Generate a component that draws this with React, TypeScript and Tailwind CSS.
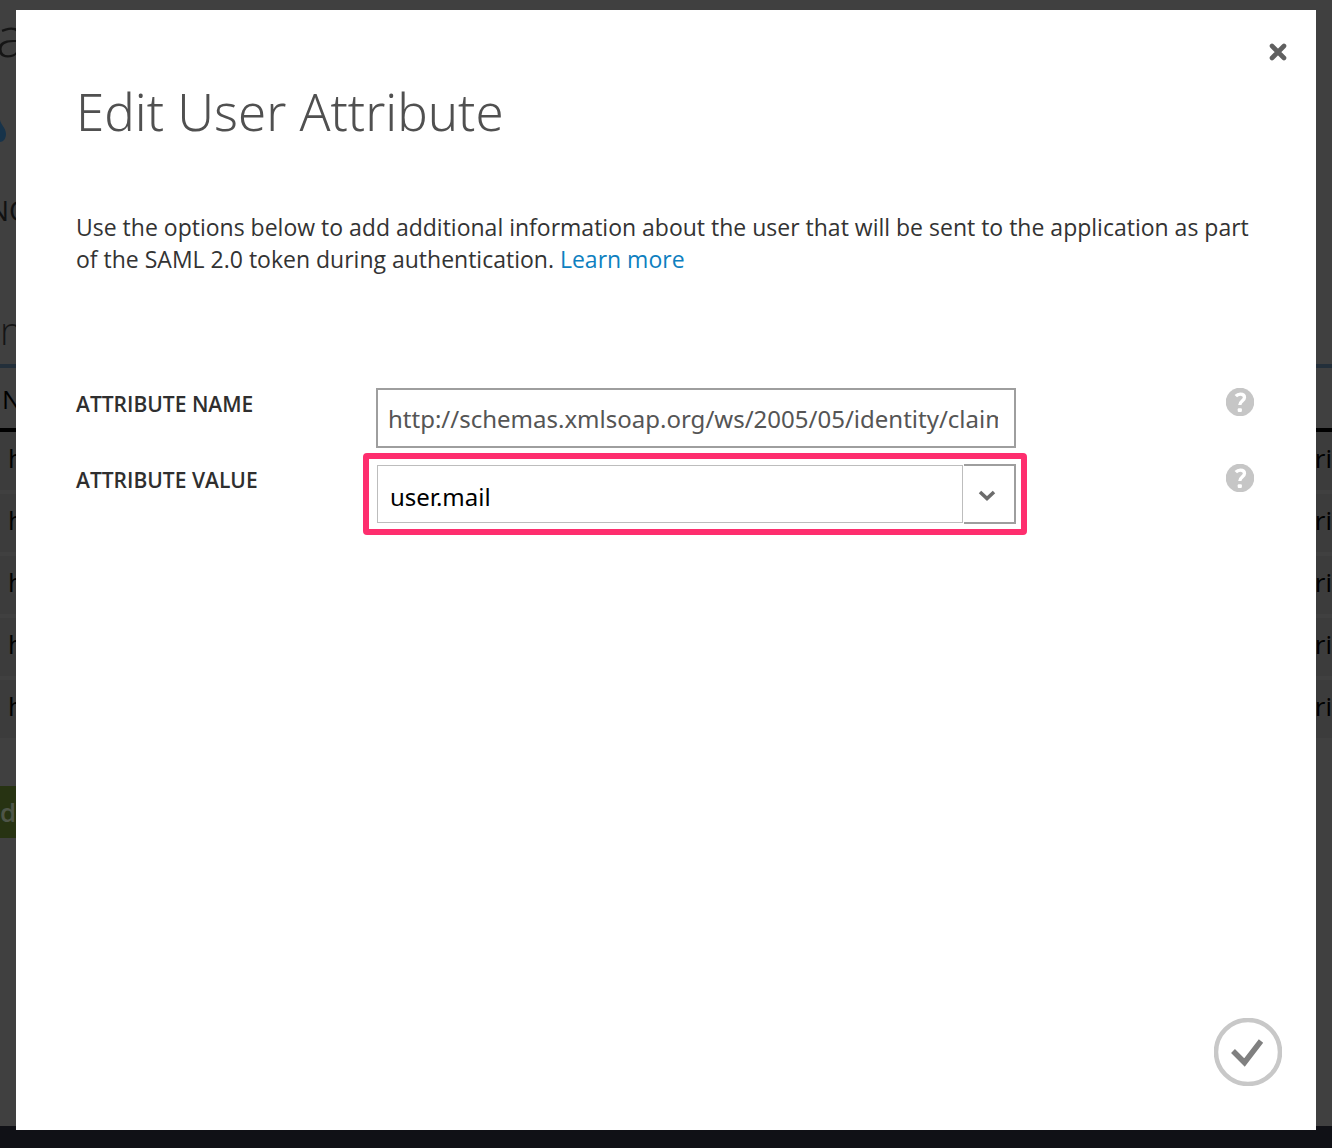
import React, { useState } from "react";

const rows = ["name", "email", "given", "surname", "upn"];

function HelpIcon({ label }: { label: string }) {
  return (
    <button type="button" aria-label={label} className="size-7 shrink-0">
      <svg viewBox="0 0 28 28" className="size-7">
        <circle cx="14" cy="14" r="14.3" fill="#c6c6c6" />
        <path
          d="M9.8 8.2C11.2 6.6 12.6 6.1 14.3 6.1C16.9 6.1 18.5 7.4 18.5 9.5C18.5 12.6 14.1 13 13.8 17"
          fill="none"
          stroke="#fff"
          strokeWidth="3.3"
        />
        <rect x="11.7" y="20.3" width="4.2" height="3.6" rx="1" fill="#fff" />
      </svg>
    </button>
  );
}

function PageBehind() {
  return (
    <div aria-hidden="true" className="col-start-1 row-start-1 flex flex-col overflow-hidden bg-[#404040] text-black">
      <div className="-ml-1 h-20 text-[56px] leading-[70px] font-light text-[#151515]">a</div>
      <div className="h-[104px] pt-10">
        <svg viewBox="0 0 6 22" className="h-[22px] w-1.5">
          <path d="M0 0C1 5 6 8 6 14C6 19 3 22 0 22Z" fill="#17334a" />
        </svg>
      </div>
      <div className="-ml-3 h-[116px] text-[28px] leading-[52px] text-[#111111]">NO</div>
      <div className="h-16 text-[38px] leading-[60px] font-light text-[#151515]">n</div>
      <div className="h-1 bg-[#232f3a]" />
      <div className="h-[60px] pl-0.5 text-[26px] leading-[62px]">N</div>
      <div className="h-1 bg-black" />
      {rows.map((row) => (
        <div
          key={row}
          className="flex h-[62px] justify-between border-b-4 border-[#404040] bg-[#3c3c3c] pl-2 text-[26px] leading-[52px]"
        >
          <span>h</span>
          <span>tri</span>
        </div>
      ))}
      <div className="mt-11 h-[52px] w-10 bg-[#273312] text-[26px] leading-[52px] font-semibold text-[#4e5548]">d</div>
      <div className="mt-auto h-[22px] bg-[#101116]" />
    </div>
  );
}

export default function App() {
  const [name, setName] = useState("http://schemas.xmlsoap.org/ws/2005/05/identity/claims/emailaddress");
  const [value, setValue] = useState("user.mail");

  return (
    <div className="grid min-h-screen grid-cols-1 font-['Open_Sans',sans-serif]">
      <PageBehind />
      <div
        role="dialog"
        aria-labelledby="dialog-title"
        className="relative col-start-1 row-start-1 mx-4 mt-2.5 mb-[18px] flex flex-col bg-white px-15"
      >
        <button type="button" aria-label="Close" className="absolute top-8 right-7 size-5">
          <svg viewBox="0 0 20 20" className="size-5">
            <path d="M4 4L16 16M16 4L4 16" stroke="#606060" strokeWidth="4.6" strokeLinecap="round" />
          </svg>
        </button>

        <h1
          id="dialog-title"
          className="pt-[66px] font-['Noto_Sans',sans-serif] text-[51px] leading-[70px] font-light text-[#505050]"
        >
          Edit User Attribute
        </h1>

        <p className="-mr-4 mt-[65px] text-[23px] leading-8 text-[#333333]">
          Use the options below to add additional information about the user that will be sent to the application as part{" "}
          <br />
          of the SAML 2.0 token during authentication.{" "}
          <a href="#learn" className="text-[#0e7fc0]">
            Learn more
          </a>
        </p>

        <form className="mt-[113px] flex flex-1 flex-col" onSubmit={(e) => e.preventDefault()}>
          <div className="flex">
            <label htmlFor="attr-name" className="w-75 shrink-0 text-[21px] leading-8 font-semibold text-[#2f2f2f]">
              ATTRIBUTE NAME
            </label>
            <input
              id="attr-name"
              value={name}
              onChange={(e) => setName(e.target.value)}
              className="h-15 w-160 min-w-0 border-2 border-[#9e9e9e] bg-white pr-4 pl-2.5 font-['Noto_Sans',sans-serif] text-2xl text-[#555555] outline-none"
            />
            <div className="mr-0.5 ml-auto">
              <HelpIcon label="Help for attribute name" />
            </div>
          </div>

          <div className="mt-4 flex">
            <label htmlFor="attr-value" className="w-75 shrink-0 text-[21px] leading-8 font-semibold text-[#2f2f2f]">
              ATTRIBUTE VALUE
            </label>
            <div className="-mx-[13px] -my-[11px] flex w-[664px] min-w-0 rounded-sm border-6 border-[#fe2e6e] py-[5px] pr-[5px] pl-[7px]">
              <input
                id="attr-value"
                value={value}
                onChange={(e) => setValue(e.target.value)}
                className="ml-px mt-px h-[58px] min-w-0 flex-1 border border-[#bdbdbd] bg-white px-3 pt-1 font-['Noto_Sans',sans-serif] text-2xl text-black outline-none"
              />
              <button
                type="button"
                aria-label="Show attribute values"
                className="ml-px flex h-15 w-[52px] shrink-0 items-center justify-center border-y-2 border-r-2 border-[#9e9e9e] bg-white pr-1 pt-1"
              >
                <svg viewBox="0 0 18 12" className="h-3 w-[18px]">
                  <path d="M2 2L9 8.5L16 2" fill="none" stroke="#6c6c6c" strokeWidth="3.6" />
                </svg>
              </button>
            </div>
            <div className="mr-0.5 ml-auto">
              <HelpIcon label="Help for attribute value" />
            </div>
          </div>

          <button type="submit" aria-label="Complete" className="-mr-[26px] mt-auto mb-11 size-17 self-end">
            <svg viewBox="0 0 68 68" className="size-17">
              <circle cx="34" cy="34" r="32" fill="#fff" stroke="#c8c8c8" strokeWidth="4.5" />
              <path d="M19 33L30.5 44.5L47 23" fill="none" stroke="#808080" strokeWidth="5.5" />
            </svg>
          </button>
        </form>
      </div>
    </div>
  );
}
